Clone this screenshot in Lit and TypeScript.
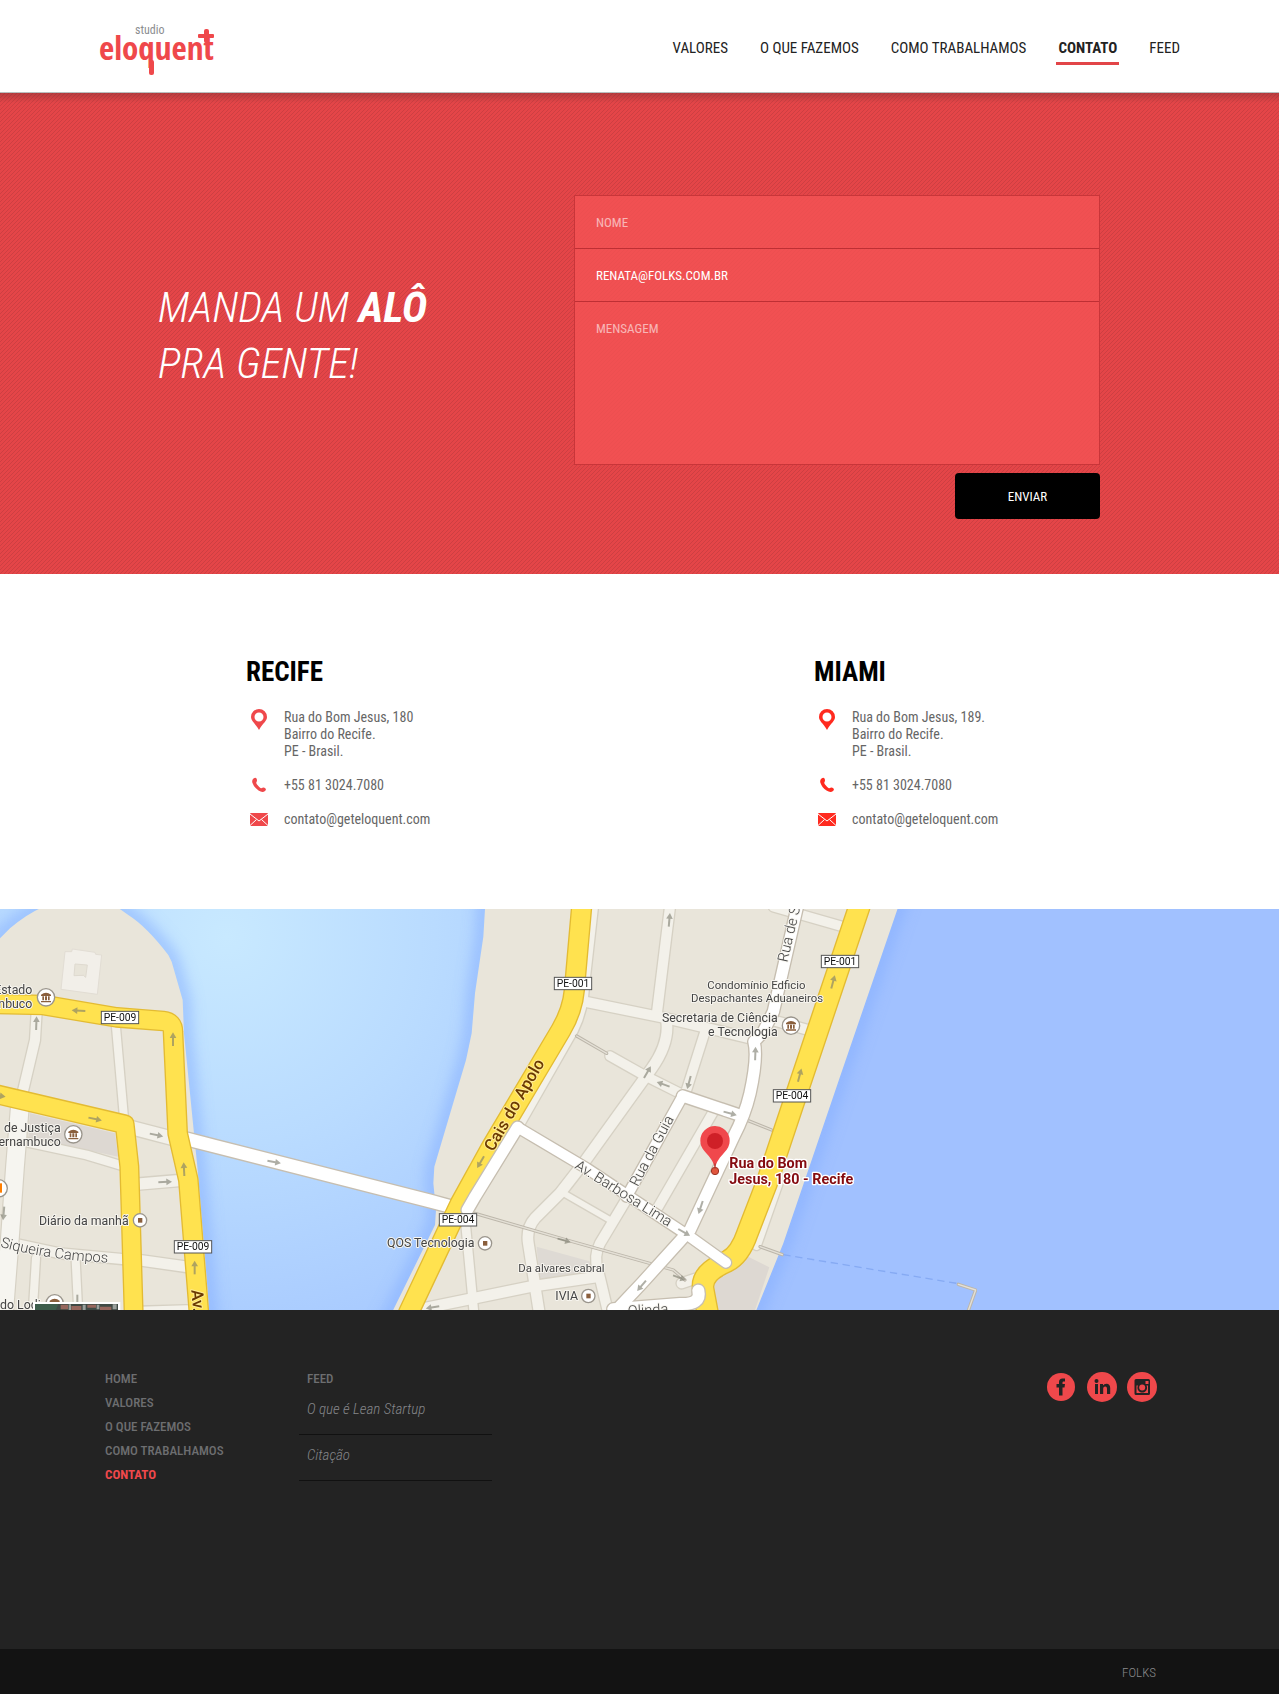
import { LitElement, html, svg, css, nothing } from "lit";
import { customElement, property } from "lit/decorators.js";

type Road = [path: string, width: number];

/* Map drawing units: three per pixel. The centre island has its own origin. */
const WEST_MINOR: Road[] = [
  ["M110 335 L105 420 L65 590", 30],
  ["M347 370 L373 665", 24],
  ["M75 725 L260 765 L365 797", 26],
  ["M405 853 L545 841", 34],
  ["M40 1030 L180 1060 L375 1078", 30],
  ["M415 1080 L570 1102", 32],
  ["M108 1075 L98 1240", 24],
  ["M227 1080 L235 1240", 24],
  ["M420 1230 L560 1226", 20],
];
const WEST_YELLOW: Road[] = [
  ["M-10 312 L130 315 L350 352 L490 363 Q519 366 519 395 L533 700 L565 840 L597 1240", 54],
  ["M-10 583 L374 673 L388 800 L401 1240", 52],
];
const BRIDGE: Road[] = [["M560 717 L1290 903 L1390 930", 38]];
const ISLAND_MINOR: Road[] = [
  ["M640 20 L614 250 Q610 330 580 390 L420 670", 28],
  ["M870 20 L830 345", 30],
  ["M605 303 L860 355 L1110 415", 30],
  ["M860 365 Q868 430 815 505 L610 790 L540 880 L465 955 Q438 985 445 1030 L478 1240", 32],
  ["M975 395 L918 575", 28],
  ["M690 468 L800 530 L910 585", 28],
  ["M1000 635 L835 920", 28],
  ["M738 900 L660 1030 Q640 1070 654 1110 L685 1240", 30],
  ["M560 885 L685 957", 18],
  ["M258 985 L282 1240", 26],
  ["M120 1228 L450 1160 L655 1130", 32],
  ["M1180 20 L1395 82", 28],
  ["M1165 357 L1285 390", 30],
  ["M1196 850 L1130 1038", 24],
  ["M905 1150 L950 1135", 30],
];
const ISLAND_PATHS = [
  "M590 408 L680 460",
  "M285 940 L560 1020 L880 1110 L915 1140",
  "M1095 658 L1175 690",
  "M1140 1040 L1207 1064",
  "M1735 1153 L1787 1170 L1762 1240",
];
const ISLAND_YELLOW: Road[] = [
  ["M605 20 L583 270 Q578 330 543 390 L335 740 L240 912 L170 1060 L85 1240", 56],
  ["M1438 20 L1240 610 L1160 850 L1102 1000 Q1080 1065 1040 1085 Q960 1120 970 1170 L983 1240", 60],
];
const ISLAND_WHITE: Road[] = [
  ["M1252 20 L1180 335 L1150 395 L1122 425 Q1134 470 1110 580 Q1095 645 1060 712 L930 990 L785 1150 L700 1240", 34],
  ["M908 588 L1078 645", 34],
  ["M908 588 L740 890", 30],
  ["M413 682 L620 805 L925 1007 L1038 1088", 30],
  ["M413 682 L285 890 L262 930", 34],
  ["M955 1172 Q965 1215 900 1212 L700 1228", 36],
];

const ARROWS: [x: number, y: number, turn: number][] = [
  [236, 332, 183], [109, 370, -88], [519, 418, -90], [285, 657, 12], [469, 705, 12],
  [822, 786, 10], [495, 846, -3], [552, 808, -93], [584, 1103, -90], [11, 940, 95],
  [-4, 587, 8], [232, 1204, 90], [2008, 60, -85], [1942, 517, -60], [1990, 553, 200],
  [2067, 547, 105], [2190, 640, 15], [2266, 461, -88], [2399, 526, -75], [2499, 246, -75],
  [1442, 786, 120], [2102, 922, 108], [2052, 997, 30], [1925, 1157, 130], [1692, 1021, 15],
  [2038, 1133, 20], [1298, 1222, 170],
];
const SHIELDS: [x: number, y: number, text: string][] = [
  [304, 334, "PE-009"], [523, 1022, "PE-009"], [1663, 232, "PE-001"],
  [1318, 941, "PE-004"], [2320, 569, "PE-004"], [2464, 166, "PE-001"],
];
const MUSEUMS = [[138, 292], [220, 703], [164, 1210], [2373, 377]];
const PLACES = [[420, 961], [1455, 1030], [1765, 1188]];
const LABELS: [x: number, y: number, anchor: string, cls: string, text: string][] = [
  [97, 283, "end", "", "Estado"], [97, 324, "end", "", "Pernambuco"],
  [182, 697, "end", "", "de Justiça"], [182, 738, "end", "", "Pernambuco"],
  [117, 976, "start", "", "Diário da manhã"], [0, 1228, "start", "", "do Lodi"],
  [1161, 1042, "start", "", "QOS Tecnologia"], [1555, 1117, "start", "small", "Da alvares cabral"],
  [1666, 1201, "start", "", "IVIA"], [2269, 267, "middle", "small", "Condomínio Edficio"],
  [2271, 306, "middle", "small", "Despachantes Aduaneiros"],
  [2333, 367, "end", "", "Secretaria de Ciência"], [2333, 409, "end", "", "e Tecnologia"],
  [2188, 804, "start", "target", "Rua do Bom"], [2188, 853, "start", "target", "Jesus, 180 - Recife"],
];
const STREETS: [x: number, y: number, turn: number, cls: string, text: string][] = [
  [574, 1170, 85, "avenue", "Av."], [1480, 757, -60, "avenue", "Cais do Apolo"],
  [2362, 188, -77, "street", "Rua de S"], [1913, 862, -62, "street", "Rua da Guia"],
  [1722, 804, 32, "street", "Av. Barbosa Lima"], [1884, 1248, -3, "street", "Olinda"],
];

const road = (roads: Road[], kind: string) => svg`
  ${roads.map(([d, w]) => svg`<path class="line edge-${kind}" d=${d} stroke-width=${w + 8}></path>`)}
  ${roads.map(([d, w]) => svg`<path class="line ${kind}" d=${d} stroke-width=${w}></path>`)}`;

@customElement("city-map")
export class CityMap extends LitElement {
  static styles = css`
    :host { display: block; }
    svg { display: block; width: 100%; height: 401px; font-family: Roboto, "Open Sans", sans-serif; }
    .line { fill: none; stroke-linejoin: round; stroke-linecap: round; }
    .land { fill: #e9e5da; }
    .shore { fill: none; stroke: #84aeff; stroke-width: 46; opacity: 0.6; }
    .block { fill: #ddd8d2; }
    .minor { stroke: #f3f1ea; }
    .edge-minor { stroke: #d6d1c4; }
    .yellow { stroke: #ffe24f; }
    .edge-yellow { stroke: #e3bb33; }
    .white { stroke: #ffffff; }
    .edge-white { stroke: #c6beb0; }
    .path-edge { stroke: #bcb6aa; stroke-width: 10; }
    .path-fill { stroke: #e4e0d6; stroke-width: 4; }
    .ferry { fill: none; stroke: #86aaf3; stroke-width: 4; stroke-dasharray: 22 14; }
    .arrow { fill: none; stroke: #7a7a6c; stroke-width: 6; opacity: 0.6; }
    .head { fill: #7a7a6c; stroke: none; }
    text { font-size: 37px; fill: #444444; stroke: #f7f5ef; stroke-width: 6; stroke-linejoin: round; paint-order: stroke; }
    .small { font-size: 34px; }
    .street { font-size: 44px; font-weight: 300; }
    .avenue { font-size: 50px; font-weight: 500; fill: #6b3a00; stroke: #ffec94; }
    .target { font-size: 43px; font-weight: 700; fill: #850b10; stroke: #ffffff; stroke-width: 8; }
    .shield { fill: #ffffff; stroke: #555555; stroke-width: 3; }
    .shield-text { font-size: 31px; fill: #111111; stroke: none; }
    .poi { fill: #ffffff; stroke: #9a958c; stroke-width: 4; }
    .brown { fill: #8a5f3c; }
  `;

  render() {
    return html`
      <svg viewBox="0 27 3837 1203" preserveAspectRatio="xMidYMid slice" role="img" aria-label="Mapa: Rua do Bom Jesus, 180 - Recife">
        <defs>
          <radialGradient id="bay" gradientUnits="userSpaceOnUse" cx="680" cy="110" r="1250">
            <stop offset="0" stop-color="#c8e9ff"></stop>
            <stop offset="0.5" stop-color="#b9dbff"></stop>
            <stop offset="1" stop-color="#a8caff"></stop>
          </radialGradient>
          <filter id="soft" x="-10%" y="-10%" width="120%" height="120%"><feGaussianBlur stdDeviation="20"></feGaussianBlur></filter>
        </defs>
        <rect x="0" y="27" width="1900" height="1203" fill="url(#bay)"></rect>
        <rect x="1900" y="27" width="1937" height="1203" fill="#a1c1ff"></rect>
        ${["shore", "land"].map((cls) => svg`<g filter=${cls === "shore" ? "url(#soft)" : "none"}>
          <path class=${cls} d="M-60 150 L0 115 L30 85 Q75 45 130 20 H350 L385 45 Q440 80 505 165 L515 185 L548 300 L552 400 L574 620 L592 800 L614 1060 L632 1290 H-60Z"></path>
          <path class=${cls} d="M1457 -30 L1455 27 L1450 110 L1425 280 L1415 400 L1398 480 L1303 800 L1300 850 L1308 930 L1305 975 L1150 1290 H2245 L2350 1030 L2520 530 L2712 -30Z"></path>
        </g>`)}
        <path class="block" d="M90 640 L345 700 L355 770 L85 712Z"></path>
        <path d="M195 155 L215 155 L217 147 L285 157 L287 163 L305 165 L292 283 L183 268Z" fill="#f2efe9" stroke="#e2ddd4" stroke-width="3"></path>
        <path d="M225 192 L262 195 L257 232 L250 226 L222 227Z" fill="#e8e4d9" stroke="#dfdad0" stroke-width="3"></path>
        ${road(WEST_MINOR, "minor")}
        <path class="line" d="M60 615 L45 800 L30 1010 L12 1240" stroke="#d6d1c4" stroke-width="60"></path>
        <path class="line" d="M60 615 L45 800 L30 1010 L12 1240" stroke="#f6f5f0" stroke-width="53"></path>
        ${road([["M395 683 L525 717", 40]], "minor")}
        ${road(BRIDGE, "white")}
        ${road(WEST_YELLOW, "yellow")}
        <g transform="translate(1140 0)">
          <path class="block" d="M1105 1070 L1168 1102 L1122 1240 H990 L985 1150Z"></path>
          <path d="M470 1040 L650 1090 L640 1120 L480 1150Z" fill="#dedad4"></path>
          ${road(ISLAND_MINOR, "minor")}
          ${ISLAND_PATHS.map((d) => svg`<path class="line path-edge" d=${d}></path><path class="line path-fill" d=${d}></path>`)}
          ${road(ISLAND_YELLOW, "yellow")}
          ${road(ISLAND_WHITE, "white")}
          <path class="ferry" d="M1210 1064 L1730 1150"></path>
        </g>
        ${ARROWS.map(([x, y, turn]) => svg`<g class="arrow" transform="translate(${x} ${y}) rotate(${turn})"><path d="M-20 0 H8"></path><path class="head" d="M21 0 L4 -10 V10Z"></path></g>`)}
        ${SHIELDS.map(([x, y, text]) => svg`<rect class="shield" x=${x} y=${y} width="112" height="37"></rect><text class="shield-text" x=${x + 56} y=${y + 29} text-anchor="middle">${text}</text>`)}
        ${MUSEUMS.map(([x, y]) => svg`<g transform="translate(${x} ${y})"><circle class="poi" r="26"></circle><path class="brown" d="M-15 -8 Q0 -20 15 -8 V-4 H-15Z M-11 -3 h5 V9 h-5Z M-3 -3 h6 V9 h-6Z M6 -3 h5 V9 h-5Z M-15 11 H15 V15 H-15Z"></path></g>`)}
        ${PLACES.map(([x, y]) => svg`<circle class="poi" cx=${x} cy=${y} r="20"></circle><rect class="brown" x=${x - 6} y=${y - 7} width="13" height="14"></rect>`)}
        <circle class="poi" cx="-4" cy="865" r="26"></circle>
        <rect x="-10" y="850" width="16" height="28" fill="#ff7f00"></rect>
        <path id="siqueira" d="M0 1040 Q150 1082 340 1088" fill="none"></path>
        <text class="street"><textPath href="#siqueira">Siqueira Campos</textPath></text>
        ${LABELS.map(([x, y, anchor, cls, text]) => svg`<text class=${cls} x=${x} y=${y} text-anchor=${anchor}>${text}</text>`)}
        ${STREETS.map(([x, y, turn, cls, text]) => svg`<text class=${cls} transform="translate(${x} ${y}) rotate(${turn})">${text}</text>`)}
        <rect x="99" y="1206" width="262" height="30" fill="#ffffff"></rect>
        <rect x="105" y="1212" width="249" height="24" fill="#3f4a45"></rect>
        <path d="M105 1212 h70 l-10 24 h-60Z" fill="#3d5d4b"></path>
        <path d="M182 1214 h22 v14 h-22Z M214 1218 h30 v12 h-30Z M262 1214 h26 v9 h-26Z M300 1220 h34 v10 h-34Z" fill="#96675d"></path>
        <path d="M206 1213 h7 v17 h-7Z M248 1214 h9 v16 h-9Z M290 1214 h8 v14 h-8Z M338 1213 h12 v15 h-12Z" fill="#9aa09c"></path>
        <g transform="translate(2145 0)">
          <circle cy="813" r="11" fill="#e0553d" stroke="#9c3527" stroke-width="3"></circle>
          <path d="M0 806 C-8 762 -44 758 -44 722 A44 44 0 1 1 44 722 C44 758 8 762 0 806Z" fill="#f0484c"></path>
          <path d="M0 790 V806" stroke="#9c3527" stroke-width="3"></path>
          <circle cy="723" r="24" fill="#cf2027"></circle>
        </g>
      </svg>`;
  }
}

@customElement("office-card")
export class OfficeCard extends LitElement {
  @property() city = "";
  @property() street = "";
  static styles = css`
    :host { display: block; color: var(--pin, #ef484b); }
    h2 { margin: 0 0 21px; font-size: 27px; line-height: 32px; font-weight: 700; color: #000000; }
    address { display: grid; grid-template-columns: 26px 1fr; column-gap: 12px; row-gap: 17px; font-style: normal; font-size: 14px; line-height: 17px; }
    svg { justify-self: center; fill: currentColor; }
    .text { color: #666666; text-decoration: none; }
  `;
  render() {
    return html`
      <h2>${this.city}</h2>
      <address>
        <svg width="16" height="21" viewBox="0 0 16 21" aria-hidden="true"><path fill-rule="evenodd" d="M8 0A8 8 0 0 1 16 8C16 12 12 14 8 21C4 14 0 12 0 8A8 8 0 0 1 8 0ZM8 3.500A4.500 4.500 0 1 0 8 12.500A4.500 4.500 0 1 0 8 3.500Z"></path></svg>
        <span class="text">${this.street}<br />Bairro do Recife.<br />PE - Brasil.</span>
        <svg width="14" height="16" viewBox="0 0 14 16" aria-hidden="true"><path d="M1.500 1.500Q3.500 0 4.500 1.500Q5.500 3.500 4.500 5Q3.800 6 5 7.500Q7 10 8.500 11Q9.500 11.500 10.500 10.800Q12 10.200 13.500 11.500Q14.500 12.800 13 14Q10.500 16 6.500 13.500Q2 10.500 .5 6Q-.5 3 1.500 1.500Z"></path></svg>
        <a class="text" href="tel:+558130247080">+55 81 3024.7080</a>
        <svg width="18" height="17" viewBox="0 0 18 17" aria-hidden="true"><rect y="2" width="18" height="13" rx="1"></rect><path d="M0 3L9 10L18 3M0 14.500L6.500 8.500M18 14.500L11.500 8.500" fill="none" stroke="#ffffff"></path></svg>
        <a class="text" href="mailto:contato@geteloquent.com">contato@geteloquent.com</a>
      </address>`;
  }
}

const PAGES = ["HOME", "VALORES", "O QUE FAZEMOS", "COMO TRABALHAMOS", "CONTATO"];
const slug = (name: string) => "#" + name.toLowerCase().replace(/ /g, "-");

@customElement("app-root")
export class AppRoot extends LitElement {
  static styles = css`
    :host { display: block; font-family: "Roboto Condensed", Roboto, "Open Sans", sans-serif; background: #ffffff; color: #222222; }
    * { box-sizing: border-box; }
    a { color: inherit; text-decoration: none; }
    ul { list-style: none; margin: 0; padding: 0; }

    .header { display: flex; justify-content: space-between; height: 93px; padding: 0 99px; border-bottom: 1px solid #b9bfbf; }
    .logo { display: block; margin-top: 20px; }
    .logo svg { display: block; overflow: visible; fill: #ef484b; }
    .logo-small { font-size: 12px; fill: #8b8d90; font-family: "Roboto Condensed", sans-serif; }
    .logo-name { font-size: 33px; font-weight: 700; font-family: "Open Sans Condensed", "Roboto Condensed", sans-serif; }
    .nav { display: flex; align-items: center; gap: 32px; padding-top: 6px; font-size: 15px; }
    .nav a { padding: 5px 0 4px; border-bottom: 3px solid transparent; line-height: 20px; }
    .nav .on { margin: 0 -2px; padding-inline: 2px; font-weight: 700; border-color: #e24548; }

    .hero {
      display: flex; justify-content: space-between; align-items: flex-start;
      min-height: 481px; padding: 102px 179px 54px 158px; color: #ffffff;
      background:
        linear-gradient(rgba(80, 40, 40, 0.3), rgba(80, 40, 40, 0) 10px),
        linear-gradient(135deg, #cd3f42 12.5%, #e44548 12.5% 50%, #cd3f42 50% 62.5%, #e44548 62.5%) 0 0 / 4px 4px;
    }
    h1 { margin: 84px 0 0; font-size: 43px; line-height: 56px; font-weight: 300; font-style: italic; }
    h1 b { font-weight: 700; }
    .form { width: 56%; max-width: 526px; display: flex; flex-direction: column; align-items: flex-end; gap: 8px; }
    .fields { width: 100%; border: 1px solid #c93539; background: rgba(245, 83, 85, 0.78); }
    .field { display: block; width: 100%; height: 53px; padding: 0 21px; border: 0; border-bottom: 1px solid #be2f34; border-radius: 0; background: none; font: inherit; font-size: 13px; color: #ffffff; outline: none; }
    textarea.field { height: 162px; padding-top: 18px; line-height: 17px; border: 0; resize: none; }
    .field::placeholder { color: #ffffff; opacity: 0.58; }
    .send { width: 145px; height: 46px; border: 0; border-radius: 4px; background: #000000; color: #ffffff; font: inherit; font-size: 13px; }

    .offices { display: grid; grid-template-columns: 568px 1fr; padding: 82px 99px 81px 246px; }
    .miami { --pin: #ff2a1f; }

    .footer { display: flex; min-height: 339px; padding: 57px 122px 0 105px; background: #232323; color: #6d6e70; font-size: 13px; line-height: 24px; font-weight: 500; }
    .pages { width: 194px; }
    .pages .on { color: #ef484b; font-weight: 700; }
    .feed { width: 193px; }
    .feed h3 { margin: 0; padding-left: 8px; font: inherit; }
    .feed li { height: 46px; padding: 8px 8px 0; border-bottom: 1px solid #111111; font-size: 15px; font-weight: 300; font-style: italic; }
    .feed li:first-child { height: 44px; padding-top: 6px; }
    .feed li a { color: #85868a; }
    .social { display: flex; align-items: center; gap: 10px; height: 30px; margin: 5px 0 0 auto; }
    .social svg { display: block; }
    .credit { display: flex; justify-content: flex-end; padding: 14px 123px 11px; background: #131313; color: #8a8a8c; font-size: 13px; line-height: 20px; font-weight: 300; }
  `;

  render() {
    return html`
      <header class="header">
        <a class="logo" href="#home" aria-label="studio eloquent">
          <svg width="116" height="56" viewBox="0 0 116 56">
            <text class="logo-small" x="36" y="14">studio</text>
            <text class="logo-name" x="0" y="40">eloquent</text>
            <rect x="50" y="40" width="5" height="15" rx="2"></rect>
            <rect x="99" y="14" width="16" height="4" rx="1"></rect>
            <rect x="105" y="9" width="5" height="14" rx="2"></rect>
          </svg>
        </a>
        <nav class="nav">
          ${[...PAGES.slice(1), "FEED"].map((p) => html`<a class=${p === "CONTATO" ? "on" : nothing} href=${slug(p)}>${p}</a>`)}
        </nav>
      </header>
      <main>
        <section class="hero">
          <h1>MANDA UM <b>ALÔ</b><br />PRA GENTE!</h1>
          <form class="form">
            <div class="fields">
              <input class="field" aria-label="Nome" placeholder="NOME" />
              <input class="field" aria-label="E-mail" type="email" value="RENATA@FOLKS.COM.BR" />
              <textarea class="field" aria-label="Mensagem" placeholder="MENSAGEM"></textarea>
            </div>
            <button class="send" type="button">ENVIAR</button>
          </form>
        </section>
        <section class="offices">
          <office-card city="RECIFE" street="Rua do Bom Jesus, 180"></office-card>
          <office-card class="miami" city="MIAMI" street="Rua do Bom Jesus, 189."></office-card>
        </section>
        <city-map></city-map>
      </main>
      <footer>
        <div class="footer">
          <ul class="pages">
            ${PAGES.map((p) => html`<li><a class=${p === "CONTATO" ? "on" : nothing} href=${slug(p)}>${p}</a></li>`)}
          </ul>
          <div class="feed">
            <h3>FEED</h3>
            <ul>
              <li><a href="#lean-startup">O que é Lean Startup</a></li>
              <li><a href="#citacao">Citação</a></li>
            </ul>
          </div>
          <div class="social">
            <a href="#facebook" aria-label="Facebook"><svg width="30" height="30" viewBox="0 0 30 30"><circle cx="14" cy="15" r="14" fill="#ef484b"></circle><path d="M17.500 6.500H15.500Q12 6.500 12 10V12H9.500V15.500H12V23.500H15.500V15.500H17.500L18 12H15.500V10.500Q15.500 9.500 16.500 9.500H18V6.500Z" fill="#232323"></path></svg></a>
            <a href="#linkedin" aria-label="LinkedIn"><svg width="30" height="30" viewBox="0 0 30 30"><circle cx="15" cy="15" r="15" fill="#ef484b"></circle><circle cx="9.500" cy="9" r="2" fill="#232323"></circle><path d="M8 12H11V22H8ZM13 12H16V13.500Q17 11.800 19.500 11.800Q23.200 12 23.200 16V22H20V16.500Q20 14.500 18.200 14.500Q16.200 14.500 16.200 16.500V22H13Z" fill="#232323"></path></svg></a>
            <a href="#instagram" aria-label="Instagram"><svg width="30" height="30" viewBox="0 0 30 30"><circle cx="15" cy="15" r="15" fill="#ef484b"></circle><path fill-rule="evenodd" d="M9 7H21.500Q23 7 23 8.500V21.500Q23 23 21.500 23H9Q7.500 23 7.500 21.500V8.500Q7.500 7 9 7ZM18.500 9V12H21.500V9ZM9.500 13.500V21H21V13.500H19.500A4.800 4.800 0 1 1 11 13.500Z" fill="#232323"></path><circle cx="15.200" cy="15.500" r="3" fill="#ef484b"></circle></svg></a>
          </div>
        </div>
        <div class="credit"><a href="#folks">FOLKS</a></div>
      </footer>`;
  }
}
